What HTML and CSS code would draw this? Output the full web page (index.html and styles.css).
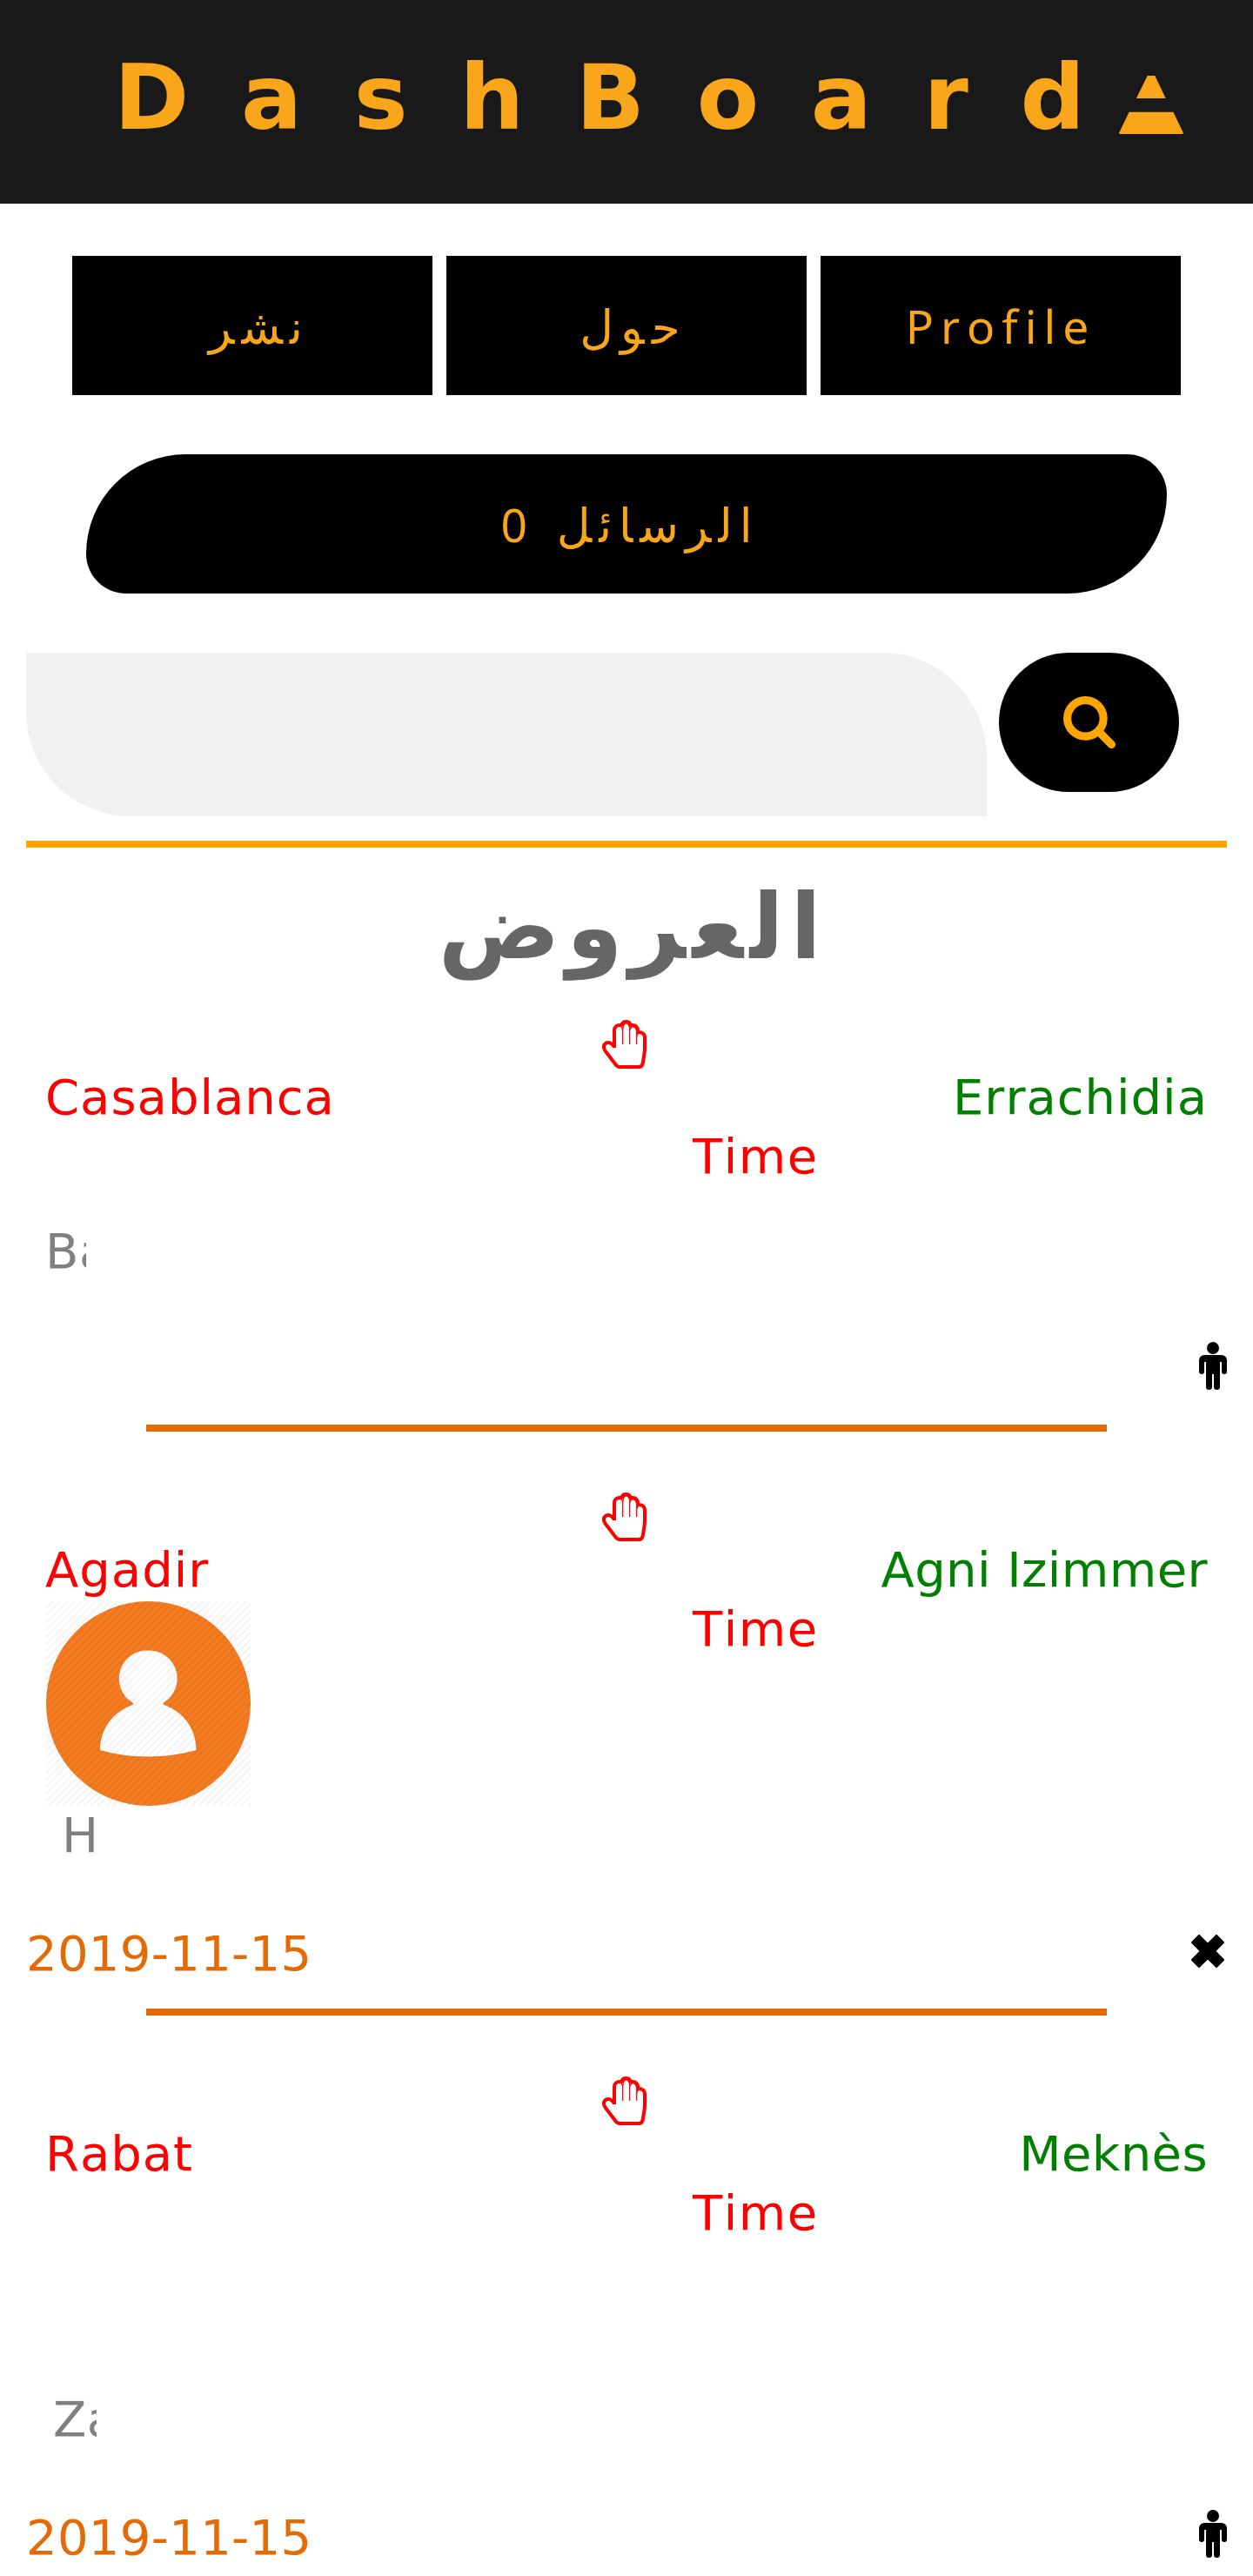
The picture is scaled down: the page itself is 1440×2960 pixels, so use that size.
FILE: index.html
```html
<!DOCTYPE html>
<html lang="ar">
<head>
<meta charset="utf-8">
<title>DashBoard</title>
<link rel="stylesheet" href="styles.css">
</head>
<body>
<svg class="defs" aria-hidden="true">
  <symbol id="palm" viewBox="0 0 51 56"><path d="M14 32V12C14 8 17 6 20 6L22.300 6C23 3.500 25 2 27.500 2S32 3.500 32.700 6L35 6C38.500 6 41 8.500 41 12V14C45.500 13.500 49 16 49 20V33C49 38 47.500 44 46.700 50C46 53 44.500 54 42 54H20C18 54 16.800 53 15.500 51.300L3.500 35.500C0 30 3 26 7 26C10 26 11.500 27.500 14 31" class="outline"/><path d="M20 7Q23.200 8 23.700 12V28M23.700 12Q24 4 27.500 3.500M27.500 3.500Q31.200 4 31.700 10V28M31.700 12Q32.500 8 35.500 7.500Q39 8 39.700 13V28M39.700 20Q40 16 43 15" class="fingers"/></symbol>
  <symbol id="male" viewBox="0 0 32 55"><circle cx="16" cy="7" r="7"/><path d="M6 15h20a6 6 0 0 1 6 6v13a3 3 0 0 1-6 0V23h-2v28.500a3.500 3.500 0 0 1-7 0V37h-2v14.500a3.500 3.500 0 0 1-7 0V23H6v11a3 3 0 0 1-6 0V21a6 6 0 0 1 6-6z"/></symbol>
</svg>
<header class="topbar">
  <h1 class="brand">DashBoard</h1>
  <svg class="cone" viewBox="0 0 74 67"><path d="M32.700 0h8.600L53.700 26H19.900z"/><path d="M11.600 41.700h50.800L74 66q-.5 1-2 1H2q-1.500 0-2-1z"/></svg>
</header>
<nav class="menu">
  <a class="btn spaced" dir="rtl"><span>ن&zwj;</span><span>&zwj;ش&zwj;</span><span>&zwj;ر</span></a>
  <a class="btn spaced" dir="rtl"><span>ح&zwj;</span><span>&zwj;و</span><span>ل</span></a>
  <a class="btn">Profile</a>
</nav>
<a class="btn messages spaced" dir="rtl"><span>ا</span><span>ل&zwj;</span><span>&zwj;ر</span><span>س&zwj;</span><span>&zwj;ا</span><span>ئ&zwj;</span><span>&zwj;ل</span> <b class="count">0</b></a>
<form class="search">
  <input class="search-box" type="text">
  <button class="search-go" type="button"><svg class="lens" viewBox="0 0 1664 1664"><path d="M1152 704q0-185-131.500-316.500T704 256 387.500 387.500 256 704t131.500 316.500T704 1152t316.500-131.500T1152 704zm512 832q0 52-38 90t-90 38q-54 0-90-38l-343-342q-179 124-399 124-143 0-273.500-55.500t-225-150-150-225T0 704t55.500-273.500 150-225 225-150T704 0t273.500 55.500 225 150 150 225T1408 704q0 220-124 399l343 343q37 37 37 90z"/></svg></button>
</form>
<h2 class="title spaced" dir="rtl"><span>ا</span><span>ل&zwj;</span><span>&zwj;ع&zwj;</span><span>&zwj;ر</span><span>و</span><span>ض</span></h2>
<main class="offers">
  <article class="offer">
    <div class="stop"><svg class="hand"><use href="#palm"/></svg></div>
    <div class="cities"><span class="from">Casablanca</span><span class="to">Errachidia</span></div>
    <div class="body"><div class="user"><div class="photo small"></div><div class="name n1">Ba</div></div><span class="time">Time</span></div>
    <div class="foot"><span class="date"></span><svg class="male"><use href="#male"/></svg></div>
  </article>
  <article class="offer">
    <div class="stop"><svg class="hand"><use href="#palm"/></svg></div>
    <div class="cities"><span class="from">Agadir</span><span class="to tight">Agni Izimmer</span></div>
    <div class="body"><div class="user"><div class="photo"><svg class="avatar" viewBox="0 0 235 235">
      <defs><pattern id="lines" width="8.200" height="8.200" patternUnits="userSpaceOnUse"><path d="M-1 9.200L9.200-1M-1 1L1-1M7.200 9.200L9.200 7.200" stroke="#000" stroke-opacity=".05" stroke-width="1.800"/></pattern></defs>
      <circle cx="117.500" cy="117.500" r="117.500" fill="#f47b20"/>
      <path d="M117.500 56.500a32.300 32.300 0 0 1 17.500 60q-1 1 0 2.200c23 8 37.500 28 37.500 52.300q-26.500 7.500-55.500 7.500t-55-7.500c0-24.300 15-44.300 38-52.300q.5-1.500-.5-2.200a32.300 32.300 0 0 1 18-60z" fill="#fff"/>
      <rect width="235" height="235" fill="url(#lines)"/></svg></div><div class="name n2">H</div></div><span class="time">Time</span></div>
    <div class="foot"><span class="date">2019-11-15</span><svg class="cross" viewBox="0 0 38 38"><path d="M1.500 9L9 1.500L19 11.500L29 1.500L36.500 9L26.500 19L36.500 29L29 36.500L19 26.500L9 36.500L1.500 29L11.500 19z"/></svg></div>
  </article>
  <article class="offer">
    <div class="stop"><svg class="hand"><use href="#palm"/></svg></div>
    <div class="cities"><span class="from">Rabat</span><span class="to tight">Meknès</span></div>
    <div class="body"><div class="user"><div class="photo"></div><div class="name n3">Za</div></div><span class="time">Time</span></div>
    <div class="foot"><span class="date">2019-11-15</span><svg class="male"><use href="#male"/></svg></div>
  </article>
</main>
</body>
</html>
```
FILE: styles.css
```css
* { box-sizing: border-box; }
html { overflow: hidden; }
body { margin: 0; height: 2960px; overflow: hidden; background: #fff; font-family: "DejaVu Sans", sans-serif; font-size: 56px; line-height: 68px; font-kerning: none; }
.defs { display: none; }
.topbar { height: 234px; background: #191919; display: flex; align-items: flex-start; padding-left: 131px; }
.brand { margin: 0; padding-top: 52px; width: 1155px; height: 180px; white-space: nowrap; font-size: 104px; line-height: 121px; font-weight: bold; letter-spacing: 59.600px; color: #faa61a; }
.cone { width: 74px; height: 67px; margin-top: 87px; fill: #faa61a; flex: none; }
.menu { display: flex; gap: 16px; padding: 60px 83px 0; }
.btn { flex: 1; height: 160px; display: block; background: #000; color: #faa61a; text-align: center; font-family: "Noto Sans", "DejaVu Sans", sans-serif; font-size: 53.330px; line-height: 162px; letter-spacing: 8px; }
/* cursive scripts ignore letter-spacing, so each joined letter carries its own gap */
.spaced span { margin-left: 8px; }
.messages { margin: 68px 99px 0; border-radius: 114.300px 45.700px; }
.count { font-weight: normal; margin-right: 12px; }
.search { display: flex; gap: 14px; align-items: flex-start; margin: 68px 30px 0; height: 224px; border-bottom: 8px solid #ffa500; }
.search-box { width: 1104px; height: 188px; border: 0; padding: 0 40px; background: #f1f1f1; border-radius: 0 120px; font-size: 52px; }
.search-go { width: 207px; height: 160px; border: 0; padding: 0; border-radius: 80px; background: #000; display: flex; align-items: center; justify-content: center; }
.lens { width: 60px; height: 60px; fill: #ffa500; }
.title { margin: 0; padding-top: 31px; height: 185px; text-align: center; font-size: 104px; line-height: 121px; color: #666; }
.title span { margin-left: 7.500px; }
.offer { height: 543px; padding: 0 30px; }
.offer:nth-child(n+2) { height: 671px; }
.offer::after { content: ""; display: block; width: 1104px; height: 8px; margin: 29px auto 57px; background: #e46a05; }
.stop { height: 68px; padding-top: 13px; display: flex; padding-left: 662px; }
.hand { width: 51px; height: 56px; display: block; }
.outline { fill: none; stroke: #f00; stroke-width: 4; stroke-linejoin: round; }
.fingers { fill: none; stroke: #f00; stroke-width: 1.300; }
.cities { height: 68px; display: flex; justify-content: space-between; padding: 0 22px 0 22px; letter-spacing: 1px; }
.from, .time { color: #f00; }
.time { letter-spacing: 1.500px; }
.to { color: #008000; }
.tight { letter-spacing: .4px; }
.body { display: flex; height: 373px; letter-spacing: .5px; }
.offer:first-child .body { height: 245px; }
.user { width: 766px; padding-left: 23px; }
.photo { height: 237px; padding-top: 2px; }
.photo.small { height: 109px; }
.avatar { width: 235px; height: 235px; display: block; }
.name { height: 68px; overflow: hidden; white-space: nowrap; color: #808080; }
.n1 { width: 46px; text-indent: -1px; }
.n2 { width: 70px; padding-left: 18px; }
.n3 { width: 58px; padding-left: 8px; }
.foot { height: 68px; display: flex; justify-content: space-between; align-items: flex-start; }
.date { color: #e46a05; letter-spacing: .3px; }
.male { width: 32px; height: 55px; margin-top: 2px; }
.cross { width: 38px; height: 38px; margin: 12px 3px 0 0; stroke: #000; stroke-width: 3; stroke-linejoin: round; }
```
